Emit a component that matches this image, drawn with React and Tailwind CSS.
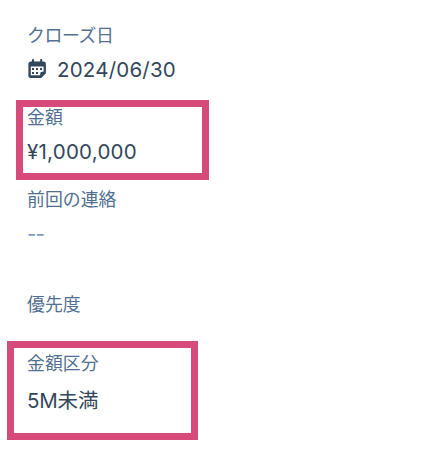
function Label({ children, className = "" }) {
  return (
    <div
      className={`h-5 whitespace-nowrap text-[17.9px] leading-5 text-[#516f90] ${className}`}
    >
      {children}
    </div>
  );
}

function Value({ children, className = "" }) {
  return (
    <div
      className={`h-6 whitespace-nowrap text-[20.5px] leading-6 text-[#33475b] ${className}`}
    >
      {children}
    </div>
  );
}

function CalendarIcon() {
  return (
    <svg width="20" height="20" viewBox="0 0 20 20" className="mb-[2px] shrink-0">
      <path
        d="M4 2.4h.9V1.2a1.1 1.1 0 0 1 2.200 0v1.200h6V1.200a1.100 1.100 0 0 1 2.200 0v1.200h1a2.600 2.600 0 0 1 2.600 2.600v9.200l-4.700 4.800H4A2.600 2.600 0 0 1 1.400 16.400V5A2.600 2.600 0 0 1 4 2.400z"
        fill="#33475b"
      />
      <path
        d="M3.800 7.600h12.800v5.200h-1.800a1.600 1.600 0 0 0-1.600 1.600v1.800H3.800z"
        fill="#fff"
      />
      <path
        d="M5 9h2v2H5zM9 9h2v2H9zM13 9h2v2h-2zM5 13h2v2H5zM9 13h2v2H9z"
        fill="#33475b"
      />
    </svg>
  );
}

export default function App() {
  return (
    <div className="flex h-[453px] w-[443px] flex-col items-start overflow-hidden bg-white pt-[26px] font-['Inter','Noto_Sans_CJK_JP',sans-serif]">
      <div className="flex h-[74px] flex-col gap-3 pl-[27px]">
        <Label className="tracking-[-0.4px]">クローズ日</Label>
        <div className="flex h-6 items-center gap-[10px]">
          <CalendarIcon />
          <Value className="tracking-[0.2px]">2024/06/30</Value>
        </div>
      </div>

      <div className="ml-4 flex h-20 w-[193px] flex-col gap-3 border-[7px] border-[#d64b7a] pt-px pl-1">
        <Label>金額</Label>
        <Value className="tracking-[0.25px]">¥1,000,000</Value>
      </div>

      <div className="flex h-[114px] flex-col gap-3 pt-[10px] pl-[27px]">
        <Label>前回の連絡</Label>
        <div className="h-6 text-[20.5px] leading-6 tracking-[-1px] text-[#7c98b6]">
          --
        </div>
      </div>

      <div className="h-[47px] pt-px pl-[27px]">
        <Label>優先度</Label>
      </div>

      <div className="ml-[7px] flex h-[99px] w-[191px] flex-col gap-[15px] border-[7px] border-[#d64b7a] pt-[6px] pl-[13px]">
        <Label>金額区分</Label>
        <Value className="tracking-[-0.2px]">5M未満</Value>
      </div>
    </div>
  );
}
